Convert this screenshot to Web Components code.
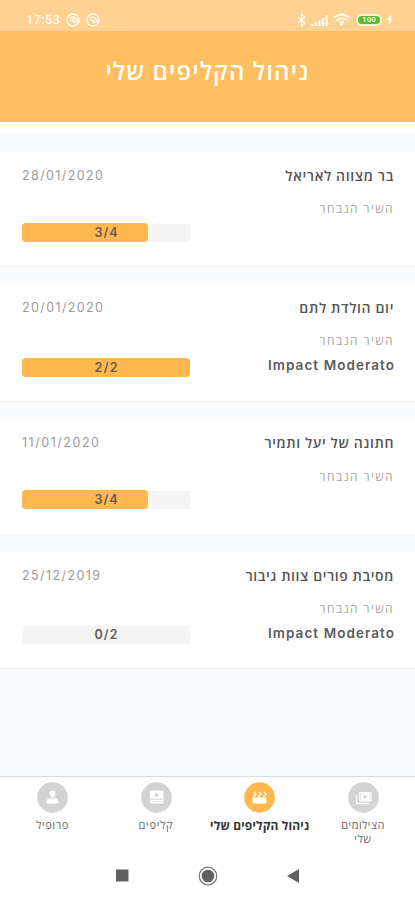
<!DOCTYPE html>
<html lang="he">
<head>
<meta charset="utf-8">
<meta name="viewport" content="width=device-width, initial-scale=1">
<title>ניהול הקליפים שלי</title>
<style>
  body {
    margin: 0;
    background: #f9fbfd;
    font-family: "Open Sans", "Liberation Sans", sans-serif;
    color: #555;
  }
</style>
</head>
<body>
<clips-app></clips-app>

<script>
// One line of text, tracked out or in until it is `width` pixels wide.
class FitText extends HTMLElement {
  constructor() {
    super();
    this.attachShadow({mode: 'open'});
    this.shadowRoot.innerHTML = `
      <style>
        :host {
          display: block;
          white-space: nowrap;
          flex: none;
        }

        span {
          display: inline-block;
        }
      </style>
      <span><slot></slot></span>
    `;
  }

  connectedCallback() {
    const span = this.shadowRoot.querySelector('span');
    const width = Number(this.getAttribute('width'));
    const count = this.textContent.length;
    const spacing = (width - span.getBoundingClientRect().width) / (count - 1);
    span.style.letterSpacing = `${spacing}px`;
    // the last letter is tracked too, take that back
    span.style.marginInlineEnd = `${-spacing}px`;
  }
}

class StatusBar extends HTMLElement {
  constructor() {
    super();
    this.attachShadow({mode: 'open'});
    this.shadowRoot.innerHTML = `
      <style>
        :host {
          display: flex;
          justify-content: space-between;
          align-items: center;
          box-sizing: border-box;
          height: 31px;
          padding: 8px 22px 0 26px;
          background: #ffd192;
          color: #fffaf0;
          font: 500 13px/16px Roboto, sans-serif;
        }

        div {
          display: flex;
          align-items: center;
        }

        svg {
          display: block;
          fill: none;
          stroke: currentColor;
        }

        .app {
          margin-left: 6px;
        }

        .battery {
          box-sizing: border-box;
          width: 26px;
          height: 12px;
          margin: 0 5px 0 6px;
          border: 2px solid #f1f5ce;
          border-radius: 6px;
          background: #5cb82c;
          color: #e8f7dc;
          font: 700 8px/8px Roboto, sans-serif;
          text-align: center;
        }
      </style>
      <div>
        <fit-text width="34">17:53</fit-text>
        ${this.appIcon()}
        ${this.appIcon()}
      </div>
      <div>
        <svg width="9" height="14" viewBox="0 0 9 14" stroke-width="1.3"><path d="M1 4l7 6-3.5 3V1L8 4l-7 6"/></svg>
        <svg width="17" height="12" viewBox="0 0 17 12" style="margin-left:5px" stroke-width="2.2"><path d="M1.5 12v-2M5 12V8.500M8.500 12V6.500M12 12V4M15.500 12V1"/></svg>
        <svg width="17" height="13" viewBox="0 0 17 13" style="margin-left:5px" stroke-width="1.9"><path d="M1 4.500q7.500-6 15 0M3.500 7.200q5-4 10 0M6 9.700q2.500-2 5 0"/><circle cx="8.500" cy="11.200" r=".6"/></svg>
        <span class="battery">100</span>
        <svg width="6" height="11" viewBox="0 0 6 11"><path d="M4 0L0 6h2.500L1.500 11 6 4.500H3.500z" fill="currentColor" stroke="none"/></svg>
      </div>
    `;
  }

  appIcon() {
    return `
      <svg class="app" width="14" height="14" viewBox="0 0 14 14" stroke-width="1.4">
        <circle cx="7" cy="7" r="6"/>
        <path d="M3.500 5.500q3-3 6 0t1 4M4 8q2-2.500 4.500 2M6.500 6l3 4"/>
      </svg>
    `;
  }
}

class PageHeader extends HTMLElement {
  constructor() {
    super();
    this.attachShadow({mode: 'open'});
    this.shadowRoot.innerHTML = `
      <style>
        :host {
          display: flex;
          justify-content: center;
          box-sizing: border-box;
          height: 91px;
          padding: 23px 0 0 1px;
          background: #ffbf61;
          color: #fffdf8;
          font-size: 24px;
          font-weight: 600;
          line-height: 34px;
          box-shadow: 0 1px 1px #e4e2e0;
        }
      </style>
      <slot></slot>
    `;
  }
}

class ClipProgress extends HTMLElement {
  connectedCallback() {
    const done = Number(this.getAttribute('done'));
    const total = Number(this.getAttribute('total'));

    this.attachShadow({mode: 'open'});
    this.shadowRoot.innerHTML = `
      <style>
        :host {
          display: grid;
          width: 168px;
          height: 19px;
          background: linear-gradient(#f5f5f5, #f5f5f5) 0 1px / 100% 18px no-repeat;
        }

        .fill, .label {
          grid-area: 1 / 1;
        }

        .fill {
          width: ${(done / total) * 100}%;
          border-radius: 4px;
          background: #ffb74f;
        }

        .label {
          justify-self: center;
          color: #5f5a55;
          font: 600 12.500px/19px Inter, sans-serif;
        }
      </style>
      <div class="fill"></div>
      <fit-text class="label" width="23">${done}/${total}</fit-text>
    `;
  }
}

class ClipCard extends HTMLElement {
  connectedCallback() {
    const song = this.getAttribute('song');

    this.attachShadow({mode: 'open'});
    this.shadowRoot.innerHTML = `
      <style>
        :host {
          display: flex;
          justify-content: space-between;
          box-sizing: border-box;
          height: var(--height, 115px);
          padding: 14px 21px 0 22px;
          border-bottom: 1px solid #f0f2f3;
          background: #fff;
          line-height: 20px;
        }

        .side {
          display: flex;
          flex-direction: column;
        }

        .date {
          color: #9a9a9a;
          font-family: Inter, sans-serif;
          font-size: 12.500px;
        }

        .details {
          align-items: flex-end;
        }

        .title {
          color: #555;
          font-size: 14px;
          font-weight: 600;
        }

        .caption {
          margin-top: var(--caption-gap, 13px);
          color: #a5a5a5;
          font-size: 12px;
        }

        .song {
          margin-top: 4px;
          color: #5c5c5c;
          font-family: Inter, sans-serif;
          font-size: 13.500px;
          font-weight: 600;
        }

        clip-progress {
          margin-top: var(--bar-gap, 37px);
        }
      </style>
      <div class="side">
        <fit-text class="date" width="${this.getAttribute('date-width')}">${this.getAttribute('date')}</fit-text>
        <clip-progress done="${this.getAttribute('done')}" total="${this.getAttribute('total')}"></clip-progress>
      </div>
      <div class="side details">
        <fit-text class="title" dir="rtl" width="${this.getAttribute('title-width')}">${this.getAttribute('name')}</fit-text>
        <fit-text class="caption" dir="rtl" width="73">השיר הנבחר</fit-text>
        ${song ? `<fit-text class="song" width="126">${song}</fit-text>` : ''}
      </div>
    `;
  }
}

const icons = {
  profile: '<circle cx="15.500" cy="11.500" r="3"/><path d="M14.500 13h2v3h-2zM9.500 21.500V19q1-3 4-3l2 1.500 2-1.500q3 0 4 3v2.500z"/>',
  clips: '<path d="M10 8.500h11.500q1 0 1 1v11q0 1-1 1H10q-1 0-1-1v-11q0-1 1-1z"/><path class="disc" d="M14 10.500l4.500 2.500-4.500 2.500z"/><path class="rule" d="M9.500 17.200H22"/><path class="cut" d="M10.500 19.500h11"/>',
  manage: '<path d="M8.500 15.500h14v5q0 1-1 1h-12q-1 0-1-1z"/><path class="line" d="M9.500 15l2.500-3-2-2m4.500 5l2.500-3-2-2m4.500 5l2.500-3-2-2"/>',
  shots: '<path class="line" d="M8.500 13v8.500H21"/><path fill-rule="evenodd" d="M11 10h12.500v9.500H11zm4.500 2.500v4.500l4-2.250z"/><path class="cut" d="M12.500 11v7.500M22 11v7.500"/>',
};

class NavTab extends HTMLElement {
  connectedCallback() {
    this.attachShadow({mode: 'open'});
    this.shadowRoot.innerHTML = `
      <style>
        :host {
          display: flex;
          flex-direction: column;
          align-items: center;
          color: #666;
          font-size: 11px;
          font-weight: 500;
          line-height: 14px;
          --disc: #d3d3d3;
        }

        :host([active]) {
          color: #333;
          font-size: 12px;
          font-weight: 700;
          line-height: 15px;
          --disc: #ffb74f;
        }

        svg {
          display: block;
          margin-bottom: 5px;
          fill: #fff;
        }

        .disc {
          fill: var(--disc);
        }

        .line {
          fill: none;
          stroke: #fff;
          stroke-width: 1.300;
        }

        .cut, .rule {
          fill: none;
          stroke: var(--disc);
          stroke-width: 1;
        }

        .cut {
          stroke-dasharray: 1.500 1;
        }
      </style>
      <svg width="31" height="31" viewBox="0 0 31 31">
        <circle class="disc" cx="15.500" cy="15.500" r="15.300"/>
        ${icons[this.getAttribute('icon')]}
      </svg>
      <slot></slot>
    `;
  }
}

class TabBar extends HTMLElement {
  constructor() {
    super();
    this.attachShadow({mode: 'open'});
    this.shadowRoot.innerHTML = `
      <style>
        :host {
          display: grid;
          grid-template-columns: repeat(4, 1fr);
          box-sizing: border-box;
          height: 76px;
          padding: 5px 0 0 1px;
          border-top: 1px solid #dcdcdc;
          background: #fff;
        }
      </style>
      <slot></slot>
    `;
  }
}

class SystemKeys extends HTMLElement {
  constructor() {
    super();
    this.attachShadow({mode: 'open'});
    this.shadowRoot.innerHTML = `
      <style>
        :host {
          display: flex;
          justify-content: center;
          align-items: center;
          gap: 69px;
          height: 47px;
          padding-bottom: 1px;
          background: #fff;
        }

        svg {
          display: block;
          fill: #606060;
        }
      </style>
      <svg width="13" height="13" viewBox="0 0 13 13"><path d="M0 .500h12.500v12H0z"/></svg>
      <svg width="20" height="20" viewBox="0 0 20 20"><circle cx="10" cy="10" r="8.800" fill="none" stroke="#777" stroke-width="1.200"/><circle cx="10" cy="10" r="6.300"/></svg>
      <svg width="13" height="14" viewBox="0 0 13 14"><path d="M12 0v14L0 7z"/></svg>
    `;
  }
}

class ClipsApp extends HTMLElement {
  constructor() {
    super();
    this.attachShadow({mode: 'open'});
    this.shadowRoot.innerHTML = `
      <style>
        :host {
          display: flex;
          flex-direction: column;
          width: 415px;
          height: 900px;
          overflow: hidden;
        }

        main {
          flex: 1;
        }

        .strip {
          height: 12px;
          margin-bottom: 18px;
          background: #fff;
        }

        clip-card {
          margin-bottom: 17px;
        }
      </style>
      <status-bar></status-bar>
      <page-header><fit-text dir="rtl" width="203">ניהול הקליפים שלי</fit-text></page-header>
      <main>
        <div class="strip"></div>
        <clip-card name="בר מצווה לאריאל" title-width="108" date="28/01/2020" date-width="81" done="3" total="4"></clip-card>
        <clip-card name="יום הולדת לתם" title-width="94" date="20/01/2020" date-width="81" done="2" total="2"
          song="Impact Moderato" style="--height: 118px; --bar-gap: 40px"></clip-card>
        <clip-card name="חתונה של יעל ותמיר" title-width="129" date="11/01/2020" date-width="77" done="3" total="4"
          style="--height: 117px; --caption-gap: 14px"></clip-card>
        <clip-card name="מסיבת פורים צוות גיבור" title-width="148" date="25/12/2019" date-width="78" done="0" total="2"
          song="Impact Moderato" style="--height: 117px; --bar-gap: 39px; margin-top: -1px"></clip-card>
      </main>
      <tab-bar>
        <nav-tab icon="profile"><fit-text dir="rtl" width="32">פרופיל</fit-text></nav-tab>
        <nav-tab icon="clips"><fit-text dir="rtl" width="34">קליפים</fit-text></nav-tab>
        <nav-tab icon="manage" active><fit-text dir="rtl" width="99">ניהול הקליפים שלי</fit-text></nav-tab>
        <nav-tab icon="shots"><fit-text dir="rtl" width="43">הצילומים</fit-text><fit-text dir="rtl" width="17">שלי</fit-text></nav-tab>
      </tab-bar>
      <system-keys></system-keys>
    `;
  }
}

customElements.define('fit-text', FitText);
customElements.define('status-bar', StatusBar);
customElements.define('page-header', PageHeader);
customElements.define('clip-progress', ClipProgress);
customElements.define('clip-card', ClipCard);
customElements.define('nav-tab', NavTab);
customElements.define('tab-bar', TabBar);
customElements.define('system-keys', SystemKeys);
customElements.define('clips-app', ClipsApp);
</script>
</body>
</html>
